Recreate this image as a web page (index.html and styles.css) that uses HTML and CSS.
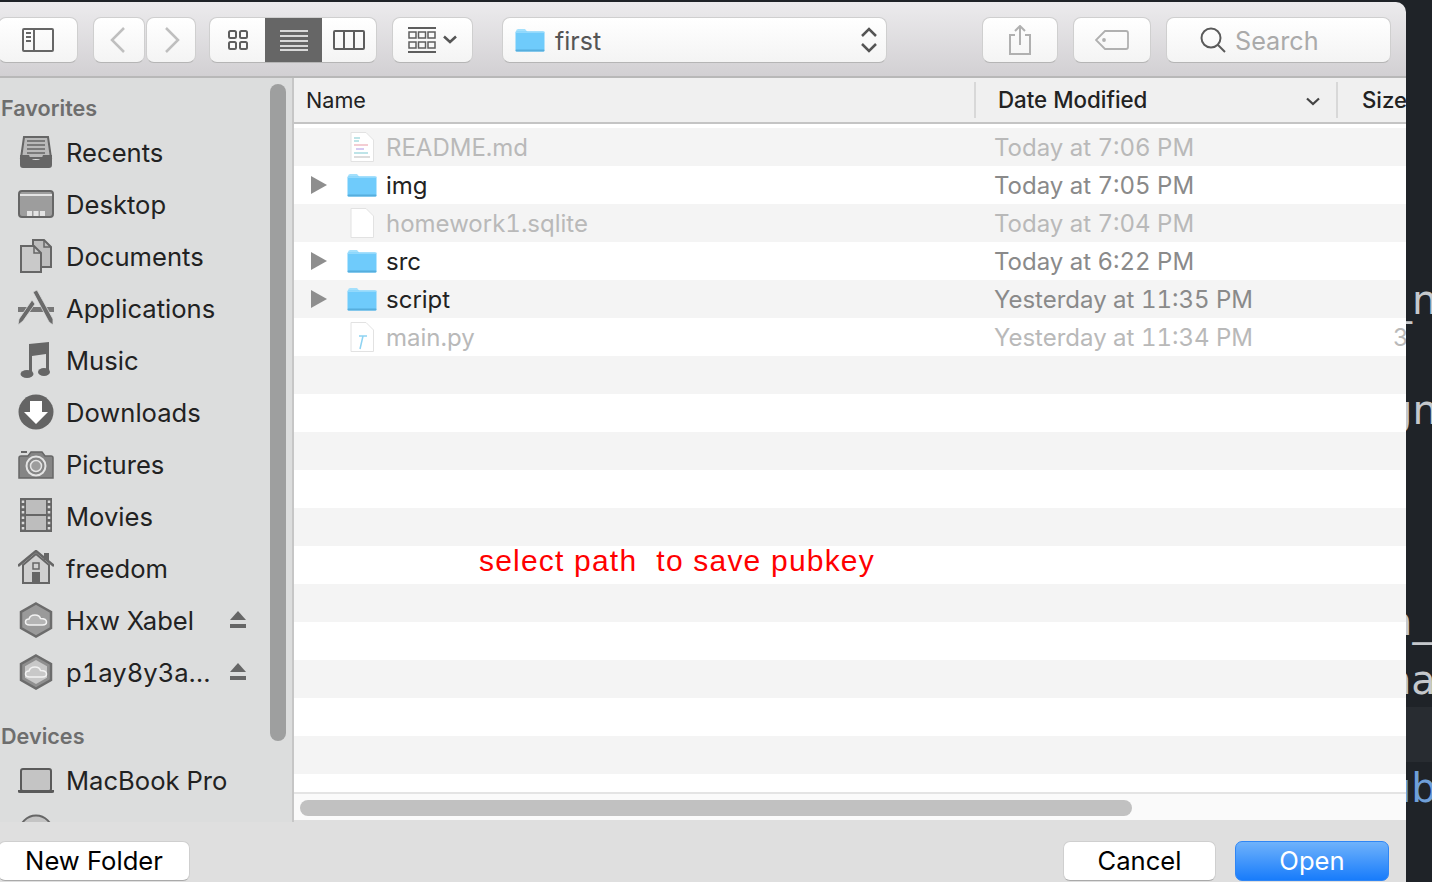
FILE: index.html
```html
<!DOCTYPE html>
<html lang="en">
<head>
    <meta charset="UTF-8">
    <title>Open</title>
    <link rel="stylesheet" href="styles.css">
</head>
<body>
    <svg class="sprite" aria-hidden="true">
        <symbol id="folder" viewBox="0 0 30 24">
            <path d="M1 3.5Q1 1 3 1H10L12.5 4H1Z" fill="#a4e0fc"/>
            <rect x="0.5" y="3.5" width="29" height="20" rx="1.5" fill="#6fcbfb"/>
            <rect x="0.5" y="3.5" width="29" height="1.5" fill="#93d9fc"/>
            <rect x="0.5" y="21.5" width="29" height="2" rx="1" fill="#56aedd"/>
        </symbol>
        <symbol id="hex" viewBox="0 0 36 36">
            <path d="M18 1.5 33 10V26L18 34.500 3 26V10Z" fill="#9a9a9a" stroke="#6c6c6c" stroke-width="2.500"/>
            <path d="M11.500 23Q7.500 23 7.500 20 7.500 17 11 17 12 13 17 13 21.500 13 22.500 16.500 28.500 16.500 28.500 20 28.500 23 24.500 23Z" fill="#b4b4b4" stroke="#f2f2f2" stroke-width="1.500"/>
        </symbol>
        <symbol id="hex-light" viewBox="0 0 36 36">
            <path d="M18 1.5 33 10V26L18 34.500 3 26V10Z" fill="#8f8f8f" stroke="#6c6c6c" stroke-width="2.500"/>
            <path d="M18 6 29 12.300V23.700L18 30 7 23.700V12.300Z" fill="#c8c8c8"/>
            <path d="M11.500 23Q7.500 23 7.500 20 7.500 17 11 17 12 13 17 13 21.500 13 22.500 16.500 28.500 16.500 28.500 20 28.500 23 24.500 23Z" fill="#c8c8c8" stroke="#f2f2f2" stroke-width="1.500"/>
        </symbol>
        <symbol id="eject" viewBox="0 0 16 18">
            <path d="M8 0 16 9H0Z" fill="#666"/>
            <rect y="13" width="16" height="4" fill="#666"/>
        </symbol>
    </svg>

    <div class="screen">
        <div class="window">
            <header class="toolbar">
                <button class="tool tool-sidebar">
                    <svg width="32" height="24" viewBox="0 0 32 24" fill="none" stroke="#666" stroke-width="2"><rect x="1" y="1" width="30" height="22" rx="1"/><path d="M12 1V23M4 5H9M4 9H9M4 13H9"/></svg>
                </button>
                <div class="nav-pair">
                    <button class="tool tool-nav">
                        <svg width="16" height="26" viewBox="0 0 16 26" fill="none" stroke="#bfbfbf" stroke-width="2.500"><path d="M14 1 2 13 14 25"/></svg>
                    </button>
                    <button class="tool tool-nav tool-nav-next">
                        <svg width="16" height="26" viewBox="0 0 16 26" fill="none" stroke="#bfbfbf" stroke-width="2.500"><path d="M2 1 14 13 2 25"/></svg>
                    </button>
                </div>
                <div class="segments">
                    <button class="segment">
                        <svg width="22" height="22" viewBox="0 0 22 22" fill="none" stroke="#5e5e5e" stroke-width="2"><rect x="2" y="2" width="7" height="7" rx="1.500"/><rect x="13" y="2" width="7" height="7" rx="1.500"/><rect x="2" y="13" width="7" height="7" rx="1.500"/><rect x="13" y="13" width="7" height="7" rx="1.500"/></svg>
                    </button>
                    <button class="segment segment-on">
                        <svg width="28" height="22" viewBox="0 0 28 22" fill="none" stroke="#fff" stroke-width="1.500"><path d="M0 2H28M0 7H28M0 12H28M0 17H28M0 21H28"/></svg>
                    </button>
                    <button class="segment segment-last">
                        <svg width="32" height="20" viewBox="0 0 32 20" fill="none" stroke="#5e5e5e" stroke-width="2"><rect x="1" y="1" width="30" height="18" rx="1"/><path d="M11 1V19M21 1V19"/></svg>
                    </button>
                </div>
                <button class="tool tool-arrange">
                    <svg width="28" height="26" viewBox="0 0 28 26" fill="none" stroke="#5e5e5e" stroke-width="1.500"><path d="M0 1H28M0 25H28" stroke-width="2"/><rect x="1" y="5" width="7" height="6"/><rect x="10.500" y="5" width="7" height="6"/><rect x="20" y="5" width="7" height="6"/><rect x="1" y="15" width="7" height="6"/><rect x="10.500" y="15" width="7" height="6"/><rect x="20" y="15" width="7" height="6"/></svg>
                    <svg width="14" height="9" viewBox="0 0 14 9" fill="none" stroke="#555" stroke-width="2.500"><path d="M1 1.500 7 7 13 1.500"/></svg>
                </button>
                <button class="path-select">
                    <svg class="path-folder" width="30" height="24"><use href="#folder"/></svg>
                    <span class="path-name">first</span>
                    <svg class="path-arrows" width="16" height="26" viewBox="0 0 16 26" fill="none" stroke="#555" stroke-width="2.500"><path d="M1 9 8 2 15 9M1 17 8 24 15 17"/></svg>
                </button>
                <button class="tool tool-share">
                    <svg width="22" height="30" viewBox="0 0 22 30" fill="none" stroke="#b0b0b0" stroke-width="2"><path d="M6 10H1V29H21V10H16M11 20V1M6 6 11 1 16 6"/></svg>
                </button>
                <button class="tool tool-tag">
                    <svg width="34" height="20" viewBox="0 0 34 20" fill="none" stroke="#b0b0b0" stroke-width="1.800"><path d="M10 1H31Q33 1 33 3V17Q33 19 31 19H10L1 10Z"/><circle cx="9" cy="10" r="1" fill="#b0b0b0"/></svg>
                </button>
                <div class="search">
                    <svg width="26" height="26" viewBox="0 0 26 26" fill="none" stroke="#5a5a5a" stroke-width="2"><circle cx="11" cy="11" r="9.500"/><path d="M18 18 25 25"/></svg>
                    <span class="search-text">Search</span>
                </div>
            </header>

            <div class="main">
                <aside class="sidebar">
                    <h3 class="side-head">Favorites</h3>
                    <ul class="side-list">
                        <li class="side-item">
                            <svg class="side-icon" viewBox="0 0 36 36"><path d="M6 3H30L33 24H3Z" fill="#b9b9b9" stroke="#666" stroke-width="2"/><path d="M9 7H27M9 11H27M9 15H27M9 19H27" stroke="#666" stroke-width="1.500"/><path d="M2 21H11Q12 26 18 26 24 26 25 21H34V31Q34 34 31 34H5Q2 34 2 31Z" fill="#666"/></svg>
                            <span>Recents</span>
                        </li>
                        <li class="side-item">
                            <svg class="side-icon" viewBox="0 0 36 36"><rect x="1" y="5" width="34" height="26" rx="3" fill="#9d9d9d" stroke="#666" stroke-width="2"/><path d="M2 9H34" stroke="#e4e4e4" stroke-width="2"/><path d="M9 25H14V30H9ZM15.500 25H20.500V30H15.500ZM22 25H27V30H22Z" fill="#e4e4e4"/></svg>
                            <span>Desktop</span>
                        </li>
                        <li class="side-item">
                            <svg class="side-icon" viewBox="0 0 36 36"><path d="M15 2H26L33 9V29H15Z" fill="#bdbdbd" stroke="#666" stroke-width="2"/><path d="M26 2V9H33" fill="none" stroke="#666" stroke-width="1.500"/><path d="M3 8H16L23 15V34H3Z" fill="#c9c9c9" stroke="#666" stroke-width="2"/><path d="M16 8V15H23" fill="none" stroke="#666" stroke-width="1.500"/></svg>
                            <span>Documents</span>
                        </li>
                        <li class="side-item">
                            <svg class="side-icon" viewBox="0 0 36 36"><path d="M0 17H36V22H0Z" fill="#777"/><path d="M15 2 19 0 35 29 35 35 31 32Z" fill="#6a6a6a" stroke="#dcdddd" stroke-width=".8"/><path d="M14 10 17 14 5 31 0 35 1 29Z" fill="#6a6a6a" stroke="#dcdddd" stroke-width=".8"/></svg>
                            <span>Applications</span>
                        </li>
                        <li class="side-item">
                            <svg class="side-icon" viewBox="0 0 36 36"><path d="M11 8 31 4V30H28V12L14 14V33H11Z" fill="#666"/><path d="M11 2 31 0V8L11 11Z" fill="#666"/><ellipse cx="9" cy="32" rx="6.500" ry="4" fill="#666"/><ellipse cx="26" cy="30" rx="6" ry="4" fill="#666"/></svg>
                            <span>Music</span>
                        </li>
                        <li class="side-item">
                            <svg class="side-icon" viewBox="0 0 36 36"><circle cx="18" cy="18" r="17.500" fill="#646464"/><path d="M12 7H24V18H30L18 30 6 18H12Z" fill="#fff"/></svg>
                            <span>Downloads</span>
                        </li>
                        <li class="side-item">
                            <svg class="side-icon" viewBox="0 0 36 36"><path d="M1 12Q1 10 3 10H10L13 6H24L27 10H33Q35 10 35 12V32H1Z" fill="#858585" stroke="#666" stroke-width="1.500"/><path d="M3 6H9" stroke="#666" stroke-width="2"/><circle cx="18" cy="20" r="9.500" fill="none" stroke="#e4e4e4" stroke-width="2"/><circle cx="18" cy="20" r="5.500" fill="#9d9d9d" stroke="#e4e4e4" stroke-width="1.500"/></svg>
                            <span>Pictures</span>
                        </li>
                        <li class="side-item">
                            <svg class="side-icon" viewBox="0 0 36 36"><rect x="3" y="1" width="30" height="32" fill="#bdbdbd" stroke="#666" stroke-width="2"/><rect x="2" y="0" width="6" height="34" fill="#666"/><rect x="28" y="0" width="6" height="34" fill="#666"/><path d="M5 2.500V32M31 2.500V32" fill="none" stroke="#d9d9d9" stroke-width="2.500" stroke-dasharray="2.500 2.800"/><path d="M8 17H28" stroke="#666" stroke-width="2"/></svg>
                            <span>Movies</span>
                        </li>
                        <li class="side-item">
                            <svg class="side-icon" viewBox="0 0 36 36"><path d="M5 15V33H31V15L18 4Z" fill="#d0d0d0" stroke="#666" stroke-width="2"/><path d="M26 3H31V10H26Z" fill="#666"/><path d="M0 16 18 1 36 16" fill="none" stroke="#666" stroke-width="2.500"/><rect x="15" y="13" width="6" height="6" fill="none" stroke="#666" stroke-width="1.500"/><rect x="14" y="22" width="8" height="12" fill="#666"/></svg>
                            <span>freedom</span>
                        </li>
                        <li class="side-item">
                            <svg class="side-icon" width="36" height="36"><use href="#hex"/></svg>
                            <span>Hxw Xabel</span>
                            <svg class="eject" width="16" height="18"><use href="#eject"/></svg>
                        </li>
                        <li class="side-item">
                            <svg class="side-icon" width="36" height="36"><use href="#hex-light"/></svg>
                            <span>p1ay8y3a…</span>
                            <svg class="eject" width="16" height="18"><use href="#eject"/></svg>
                        </li>
                    </ul>
                    <h3 class="side-head side-head-devices">Devices</h3>
                    <ul class="side-list">
                        <li class="side-item side-item-mac">
                            <svg class="side-icon" viewBox="0 0 36 36"><rect x="3" y="7" width="30" height="22" rx="2" fill="#c4c4c4" stroke="#5a5a5a" stroke-width="2"/><path d="M0 28H36V30Q36 31 34 31H2Q0 31 0 30Z" fill="#5a5a5a"/></svg>
                            <span>MacBook Pro</span>
                        </li>
                        <li class="side-item">
                            <svg class="side-icon" viewBox="0 0 36 36"><circle cx="18" cy="18" r="16.500" fill="#c4c4c4" stroke="#666" stroke-width="2"/></svg>
                        </li>
                    </ul>
                    <div class="side-thumb"></div>
                </aside>

                <section class="files">
                    <div class="file-head">
                        <span class="col-name">Name</span>
                        <span class="col-date">Date Modified
                            <svg class="sort-arrow" width="14" height="9" viewBox="0 0 14 9" fill="none" stroke="#444" stroke-width="2.200"><path d="M1 1.500 7 7 13 1.500"/></svg>
                        </span>
                        <span class="col-size">Size</span>
                    </div>
                    <div class="file-rows">
                        <div class="row row-off">
                            <span></span>
                            <svg width="24" height="30" viewBox="0 0 24 30"><path d="M1 .5H16L23.500 8V29.500H1Z" fill="#fff" stroke="#e2e2e2"/><path d="M4 6H10M4 9H9" stroke="#a9dbe0" stroke-width="1.500"/><path d="M4 13H18" stroke="#f0bcc4" stroke-width="1.500"/><path d="M6 17H14" stroke="#c9b8ee" stroke-width="1.500"/><path d="M4 21H18" stroke="#a9dbe0" stroke-width="1.500"/><path d="M4 25H20" stroke="#d0d0d0" stroke-width="1.500"/></svg>
                            <span>README.md</span><span>Today at 7:06 PM</span><span></span>
                        </div>
                        <div class="row">
                            <span class="caret"></span>
                            <svg width="30" height="24"><use href="#folder"/></svg>
                            <span>img</span><span class="row-date">Today at 7:05 PM</span><span></span>
                        </div>
                        <div class="row row-off">
                            <span></span>
                            <svg width="24" height="30" viewBox="0 0 24 30"><path d="M1 .5H16L23.500 8V29.500H1Z" fill="#fff" stroke="#e2e2e2"/></svg>
                            <span>homework1.sqlite</span><span>Today at 7:04 PM</span><span></span>
                        </div>
                        <div class="row">
                            <span class="caret"></span>
                            <svg width="30" height="24"><use href="#folder"/></svg>
                            <span>src</span><span class="row-date">Today at 6:22 PM</span><span></span>
                        </div>
                        <div class="row">
                            <span class="caret"></span>
                            <svg width="30" height="24"><use href="#folder"/></svg>
                            <span>script</span><span class="row-date">Yesterday at 11:35 PM</span><span></span>
                        </div>
                        <div class="row row-off">
                            <span></span>
                            <svg width="24" height="30" viewBox="0 0 24 30"><path d="M1 .5H16L23.500 8V29.500H1Z" fill="#fff" stroke="#e2e2e2"/><path d="M9 14H17M13 14 10 27" fill="none" stroke="#8ed3f2" stroke-width="1.500"/></svg>
                            <span>main.py</span><span>Yesterday at 11:34 PM</span><span>3</span>
                        </div>
                        <div class="row"></div>
                        <div class="row"></div>
                        <div class="row"></div>
                        <div class="row"></div>
                        <div class="row"></div>
                        <div class="row"></div>
                        <div class="row"></div>
                        <div class="row"></div>
                        <div class="row"></div>
                        <div class="row"></div>
                        <div class="row"></div>
                    </div>
                    <div class="hscroll"><div class="hscroll-thumb"></div></div>
                    <div class="note">select path&nbsp; to save pubkey</div>
                </section>
            </div>

            <footer class="actions">
                <button class="btn btn-new">New Folder</button>
                <button class="btn btn-cancel">Cancel</button>
                <button class="btn btn-open">Open</button>
            </footer>
        </div>

        <div class="behind">
            <span class="code code-1">_n</span>
            <span class="code code-2">gn</span>
            <span class="code code-3">a_</span>
            <span class="code code-4">na</span>
            <div class="code-band"></div>
            <span class="code code-5">ub</span>
        </div>
    </div>
</body>
</html>
```

FILE: styles.css
```css
* {
    box-sizing: border-box;
}
html, body {
    margin: 0;
    height: 100%;
    overflow: hidden;
}
body {
    font-family: Inter, "Liberation Sans", sans-serif;
    font-size: 25.6px;
    color: #222;
    background: #1f2328;
}
button {
    font: inherit;
    padding: 0;
}
.sprite {
    display: none;
}
.screen {
    display: flex;
    height: 882px;
    padding-top: 2px;
}
.window {
    width: 1406px;
    flex: none;
    display: flex;
    flex-direction: column;
    border-top-right-radius: 10px;
    overflow: hidden;
}

/* toolbar */
.toolbar {
    height: 76px;
    flex: none;
    display: flex;
    align-items: center;
    padding-top: 1px;
    background: linear-gradient(#ecebed, #d2d0d3);
    border-bottom: 2px solid #b8b8b8;
}
.tool, .segments, .path-select, .search {
    height: 46px;
    flex: none;
    background: linear-gradient(#fff, #f4f4f4);
    border: 1px solid #cfcfcf;
    border-bottom-color: #b5b5b5;
    border-radius: 8px;
    display: flex;
    align-items: center;
    justify-content: center;
}
.tool-sidebar {
    width: 80px;
    margin-left: -2px;
}
.nav-pair {
    display: flex;
    gap: 1px;
    margin-left: 15px;
}
.tool-nav {
    width: 52px;
    padding-right: 2px;
}
.tool-nav-next {
    width: 50px;
    padding: 0 0 0 2px;
}
.segments {
    margin-left: 13px;
    width: 168px;
    overflow: hidden;
}
.segment {
    width: 55px;
    height: 100%;
    border: 0;
    background: none;
    display: flex;
    align-items: center;
    justify-content: center;
}
.segment-on {
    width: 57px;
    background: #666;
}
.segment-last {
    flex: 1;
}
.tool-arrange {
    width: 81px;
    margin-left: 15px;
    gap: 7px;
}
.path-select {
    width: 385px;
    margin-left: 29px;
    justify-content: flex-start;
    padding: 0 9px 0 12px;
    color: #555;
}
.path-name {
    margin-left: 10px;
    padding-top: 3px;
    flex: 1;
    text-align: left;
    font-size: 25px;
}
.tool-share {
    width: 76px;
    margin-left: 95px;
}
.tool-tag {
    width: 78px;
    margin-left: 15px;
}
.search {
    width: 225px;
    margin-left: 15px;
    justify-content: flex-start;
    padding-left: 33px;
    gap: 9px;
}
.search-text {
    padding-top: 2px;
    font-size: 25.2px;
    color: #aaa;
}

/* sidebar + file list */
.main {
    height: 744px;
    flex: none;
    display: flex;
}
.sidebar {
    width: 294px;
    flex: none;
    position: relative;
    overflow: hidden;
    background: #dcdddd;
    border-right: 2px solid #c6c6c6;
    font-variant-numeric: tabular-nums;
}
.side-head {
    margin: 0;
    padding: 17px 0 0 1px;
    height: 48px;
    font-size: 21.6px;
    font-weight: 600;
    color: #6e6e6e;
}
.side-head-devices {
    padding-top: 16px;
    height: 38px;
    margin-top: 9px;
}
.side-list {
    list-style: none;
    margin: 0;
    padding: 0;
}
.side-item {
    height: 52px;
    display: flex;
    align-items: center;
    padding-left: 18px;
    padding-right: 46px;
    white-space: nowrap;
}
.side-item span {
    flex: 1;
}
.side-item-mac {
    margin-top: 9px;
}
.side-icon {
    width: 36px;
    height: 36px;
    flex: none;
    margin-right: 12px;
}
.eject {
    flex: none;
}
.side-thumb {
    position: absolute;
    left: 270px;
    top: 6px;
    width: 16px;
    height: 657px;
    border-radius: 8px;
    background: #9e9f9f;
}
.files {
    flex: 1;
    min-width: 0;
    position: relative;
    display: flex;
    flex-direction: column;
    background: #fff;
}
.file-head {
    height: 46px;
    flex: none;
    display: flex;
    align-items: center;
    font-size: 21.6px;
    background: #f0f0f0;
    border-bottom: 2px solid #c4c4c4;
    overflow: hidden;
}
.col-name {
    width: 680px;
    flex: none;
    padding-left: 12px;
    align-self: stretch;
    display: flex;
    align-items: center;
}
.col-date {
    width: 364px;
    flex: none;
    height: 36px;
    padding: 0 0 2px 22px;
    display: flex;
    align-items: center;
    font-size: 22.3px;
    font-weight: 500;
    border-left: 2px solid #d8d8d8;
    border-right: 2px solid #d8d8d8;
    position: relative;
}
.sort-arrow {
    position: absolute;
    left: 330px;
    top: 15px;
}
.col-size {
    flex: none;
    padding: 0 0 2px 24px;
    font-size: 22.2px;
    font-weight: 500;
}
.file-rows {
    flex: 1;
    min-height: 0;
    overflow: hidden;
    padding-top: 4px;
    border-bottom: 2px solid #e4e4e4;
}
.row {
    height: 38px;
    display: grid;
    grid-template-columns: 52px 40px 608px 399px 1fr;
    align-items: center;
    overflow: hidden;
    font-size: 24px;
    font-variant-numeric: tabular-nums;
}
.row svg {
    justify-self: center;
    margin-left: -8px;
}
.row:nth-child(odd) {
    background: #f4f4f4;
}
.row-off {
    color: #b9b9b9;
}
.row-date {
    color: #8a8a8a;
}
.caret {
    width: 0;
    height: 0;
    margin-left: 17px;
    border-left: 16px solid #8e8e8e;
    border-top: 9px solid transparent;
    border-bottom: 9px solid transparent;
}
.hscroll {
    height: 28px;
    flex: none;
    padding: 6px 0 0 6px;
    background: #fafafa;
    border-bottom: 2px solid #dfdfdf;
}
.hscroll-thumb {
    width: 832px;
    height: 16px;
    border-radius: 8px;
    background: #c1c1c1;
}
.note {
    position: absolute;
    left: 185px;
    top: 466px;
    font-family: "Liberation Sans", sans-serif;
    font-size: 30px;
    letter-spacing: 1.2px;
    color: #f00;
    white-space: nowrap;
}

/* footer */
.actions {
    flex: 1;
    display: flex;
    align-items: center;
    padding: 17px 17px 0 0;
    background: #dfdfdf;
}
.btn {
    height: 40px;
    background: #fff;
    border: 1px solid #cfcfcf;
    border-bottom-color: #aaa;
    border-radius: 7px;
}
.btn-new {
    width: 192px;
    margin-left: -2px;
    margin-right: auto;
}
.btn-cancel {
    width: 153px;
}
.btn-open {
    width: 154px;
    margin-left: 19px;
    color: #fff;
    border: 1px solid #2f86f5;
    background: linear-gradient(#6fb2fb, #187cfb);
}

/* editor text showing behind the dialog */
.behind {
    flex: 1;
    position: relative;
    overflow: hidden;
}
.code {
    position: absolute;
    left: 0;
    font-family: "DejaVu Sans", sans-serif;
    font-size: 40px;
    line-height: 48px;
    color: #c5c8cc;
    white-space: nowrap;
}
.code-1 { top: 274px; left: -14px; }
.code-2 { top: 384px; left: -19px; }
.code-3 { top: 595px; left: -18px; }
.code-4 { top: 654px; left: -20px; }
.code-5 { top: 762px; left: -20px; color: #6f9fd8; }
.code-band {
    position: absolute;
    left: 0;
    right: 0;
    top: 705px;
    height: 55px;
    background: #282c31;
}
```
